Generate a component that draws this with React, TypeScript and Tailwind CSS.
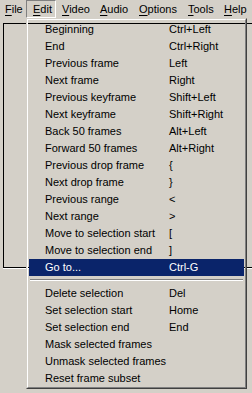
type MenuItem =
  | { label: string; shortcut?: string; active?: boolean }
  | { separator: true };

const editItems: MenuItem[] = [
  { label: "Beginning", shortcut: "Ctrl+Left" },
  { label: "End", shortcut: "Ctrl+Right" },
  { label: "Previous frame", shortcut: "Left" },
  { label: "Next frame", shortcut: "Right" },
  { label: "Previous keyframe", shortcut: "Shift+Left" },
  { label: "Next keyframe", shortcut: "Shift+Right" },
  { label: "Back 50 frames", shortcut: "Alt+Left" },
  { label: "Forward 50 frames", shortcut: "Alt+Right" },
  { label: "Previous drop frame", shortcut: "{" },
  { label: "Next drop frame", shortcut: "}" },
  { label: "Previous range", shortcut: "<" },
  { label: "Next range", shortcut: ">" },
  { label: "Move to selection start", shortcut: "[" },
  { label: "Move to selection end", shortcut: "]" },
  { label: "Go to...", shortcut: "Ctrl-G", active: true },
  { separator: true },
  { label: "Delete selection", shortcut: "Del" },
  { label: "Set selection start", shortcut: "Home" },
  { label: "Set selection end", shortcut: "End" },
  { label: "Mask selected frames" },
  { label: "Unmask selected frames" },
  { label: "Reset frame subset" },
];

function BarItem({
  first,
  rest,
  className,
}: {
  first: string;
  rest: string;
  className: string;
}) {
  return (
    <div className={`h-[18px] leading-[18px] ${className}`}>
      <span className="underline underline-offset-[2px]">{first}</span>
      {rest}
    </div>
  );
}

export default function App() {
  return (
    <div
      className="relative h-[393px] w-[252px] overflow-hidden bg-[#d4d0c8] text-[11px] text-black"
      style={{ fontFamily: '"Liberation Sans", Arial, sans-serif' }}
    >
      {/* menu bar */}
      <div className="flex h-[19px] items-start">
        <BarItem first="F" rest="ile" className="w-[26px] pl-[5px]" />
        <div className="h-[18px] w-[30px] border-t border-l border-t-[#808080] border-l-[#808080] border-b border-r border-b-white border-r-white pl-[6px] leading-[16px]">
          <span className="underline underline-offset-[2px]">E</span>dit
        </div>
        <BarItem first="V" rest="ideo" className="w-[37px] pl-[6px]" />
        <BarItem first="A" rest="udio" className="w-[39px] pl-[7px]" />
        <BarItem first="O" rest="ptions" className="w-[49px] pl-[7px]" />
        <BarItem first="T" rest="ools" className="w-[36px] pl-[7px]" />
        <BarItem first="H" rest="elp" className="pl-[7px]" />
      </div>

      {/* client area behind the menu */}
      <div className="ml-[3px] mt-[4px] w-[260px] border-b border-b-white">
        <div className="h-[245px] border-t border-l border-b border-black" />
      </div>

      {/* dropped-down Edit menu */}
      <div className="absolute left-[26px] top-[18px] w-[221px] border-t border-l border-t-[#d4d0c8] border-l-[#d4d0c8] border-b border-r border-b-[#404040] border-r-[#404040]">
        <div className="border-t border-l border-t-white border-l-white border-b border-r border-b-[#808080] border-r-[#808080] px-[1px] pt-[1px]">
          {editItems.map((item, i) =>
            "separator" in item ? (
              <div key={i} className="px-[1px] pt-[3px] pb-[4px]">
                <div className="h-[1px] bg-[#808080]" />
                <div className="h-[1px] bg-white" />
              </div>
            ) : (
              <div
                key={i}
                className={`flex h-[17px] items-center pl-[16px] leading-[17px] ${
                  item.active ? "bg-[#0a246a] text-white" : ""
                }`}
              >
                <span className="w-[124px] whitespace-nowrap">{item.label}</span>
                {item.shortcut && (
                  <span className="whitespace-nowrap">{item.shortcut}</span>
                )}
              </div>
            )
          )}
        </div>
      </div>
    </div>
  );
}
